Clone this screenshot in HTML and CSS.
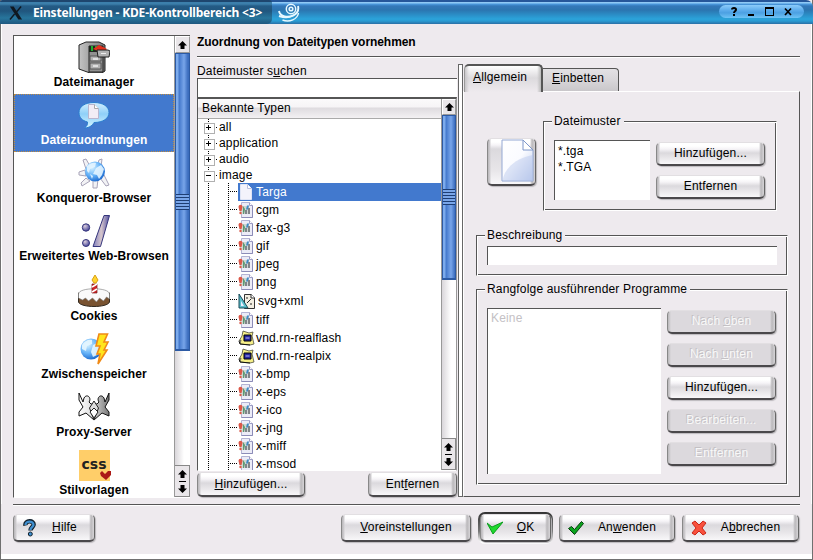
FILE: index.html
```html
<!DOCTYPE html>
<html lang="de">
<head>
<meta charset="utf-8">
<title>Einstellungen - KDE-Kontrollbereich</title>
<link rel="stylesheet" href="styles.css">
</head>
<body>
<svg class="defs" aria-hidden="true">
  <defs>
    <linearGradient id="gSteel" x2="1"><stop stop-color="#c4c4c4"/><stop offset="1" stop-color="#777"/></linearGradient>
    <linearGradient id="gPage" x2="1" y2="1"><stop stop-color="#fff"/><stop offset=".5" stop-color="#fafbff"/><stop offset="1" stop-color="#b9c9ec"/></linearGradient>
    <radialGradient id="gGlobe" cx=".35" cy=".3" r=".8"><stop stop-color="#d8f2ff"/><stop offset=".5" stop-color="#68b4f8"/><stop offset="1" stop-color="#0d5cc8"/></radialGradient>
    <linearGradient id="gBubble" x2="0" y2="1"><stop stop-color="#d4efff"/><stop offset=".45" stop-color="#8fd0f8"/><stop offset="1" stop-color="#d7f6ff"/></linearGradient>
    <linearGradient id="gSlash" x2="1"><stop stop-color="#8180bd"/><stop offset=".5" stop-color="#d6c6cc"/><stop offset="1" stop-color="#5250a0"/></linearGradient>
    <radialGradient id="gBall" cx=".35" cy=".3" r=".7"><stop stop-color="#ddd0dd"/><stop offset="1" stop-color="#4d4c9c"/></radialGradient>
    <linearGradient id="gWing" x2="1"><stop stop-color="#fff"/><stop offset=".45" stop-color="#ddd"/><stop offset="1" stop-color="#777"/></linearGradient>
    <symbol id="up" viewBox="0 0 9 8"><path d="M4.500 0 9 4.500H6.500V8h-4V4.500H0z" fill="#000"/></symbol>
    <symbol id="img" viewBox="0 0 16 16">
      <path d="M3.500.5h8l3 3v12h-11z" fill="#ececf7" stroke="#b4b4d4"/><path d="M14.500 3.500v12h-11" fill="none" stroke="#8c8cb8"/><path d="M11.500.5v3h3" fill="#fff" stroke="#9c9cc4"/>
      <path d="M1 4h10v8H2z" fill="#d0d6d2"/><path d="M.5 5c0-3 4-3 4 0l-1 4h-2z" fill="#dc5748"/><circle cx="2.500" cy="11" r="1.200" fill="#dc5748"/><path d="M5 4l2 3-1 5H5z" fill="#5c9a72"/><path d="M6 3.500l2 4 1-4h2l-1 4H8z" fill="#3f8ac6"/><path d="M10 6h2v6h-2zM7 8h2v4H7z" fill="#7f8489"/>
    </symbol>
    <symbol id="real" viewBox="0 0 17 16">
      <path d="M5 1l6 2 4-1-1 4 2 8-4 1-10-1 1-4-2 1 3-5z" fill="#f6ef88" stroke="#4a4a3c" stroke-width=".8"/><path d="M1 11l1 3 10 1" fill="none" stroke="#111"/><path d="M6 5h7v6H6z" fill="#2525a0" stroke="#000"/><path d="M7.500 8h4" stroke="#bdbdf4"/>
    </symbol>
  </defs>
</svg>

<div class="window">
  <header class="titlebar">
    <div class="caption">
      <svg class="xlogo" viewBox="0 0 15 14"><path d="M1 0h4l9 14h-4z" fill="#101820"/><path d="M13 0 8 6M6 8l-5 6" stroke="#101820" stroke-width="1.500"/></svg>
      <span>Einstellungen - KDE-Kontrollbereich &lt;3&gt;</span>
    </div>
    <svg class="swirl" viewBox="0 0 22 20"><g fill="none" stroke="#e6f8ff"><circle cx="13" cy="6" r="4.700" stroke-width="1.500"/><circle cx="13" cy="6" r="1.800" stroke-width="1.600"/><path d="M1 8c1 6 9 7 15 4" stroke-width="1.900"/><path d="M20 3c2 8-8 14-19 10" stroke-width="1.900"/><path d="M20.500 10c-1 6-9 10-16 7" stroke-width="1.500"/></g></svg>
    <div class="winbuttons">
      <svg viewBox="0 0 85 14"><g fill="none" stroke="#000" stroke-width="2"><path d="M13 4.500c0-2 4-2 4 0s-2 1.500-2 3.500M15 9v2"/><path d="M29 10h6"/><path d="M46.500 3v8M54.500 3v8M46 10.500h9" stroke-width="1"/><path d="M46 3h9"/><path d="M66 3.500l6 6.500M72 3.500l-6 6.500" stroke-width="1.700"/></g></svg>
    </div>
  </header>

  <main class="content">
    <nav class="modules">
      <div class="modlist">
        <div class="mod"><svg viewBox="0 0 32 32"><path d="M1 4 8 1h13l6 3v26l-3 2H12L1 28z" fill="url(#gSteel)" stroke="#222"/><path d="M11 5h14v26H11z" fill="#909090" stroke="#222"/><path d="M11 5h14v6H11z" fill="#202820"/><path d="M14 5v5M18 5v4" stroke="#1fae2d" stroke-width="2"/><path d="M15 8l6-4 8 4-4 4z" fill="#e3311d"/><path d="M12 15h11v5H12zM12 22h11v6H12z" fill="#b2b2b2" stroke="#555"/><path d="M15 18h5M15 25h5" stroke="#eee" stroke-width="1.500"/><path d="M19 9h11l2 1-1 6H20z" fill="#b2b2b2" stroke="#222"/><path d="M23 12.500h5" stroke="#eee"/></svg><span>Dateimanager</span></div>
        <div class="mod selected"><svg viewBox="0 0 32 32"><path d="M16 3.500C7 3.500 1 7.500 1 13.500c0 5 3 8 8.500 9.500 0 3-.5 4-3 6 6-.5 8-3 9.500-5.500 9 0 15-4 15-10S25 3.500 16 3.500z" fill="url(#gBubble)" stroke="#2b7ecf"/><path d="M10.500 5.500h6l4 4v10h-10z" fill="#f2edf5" stroke="#b9b6cf"/><path d="M16.500 5.500v4h4" fill="#fff" stroke="#aaa"/></svg><span>Dateizuordnungen</span></div>
        <div class="mod"><svg viewBox="0 0 32 32"><g fill="#f2f2f5" stroke="#a7a3b8"><path d="M5 3l3-1 4 7-4 3zM21 3l3-1-1 8-4-1zM1 15l6-2 1 6-7-1zM3 26l5-5 4 3-8 5zM15 22h5l-1 9h-4zM22 21l4-3 5 10-3 1z"/></g><circle cx="17" cy="14.500" r="10" fill="url(#gGlobe)"/><path d="M9 9c3-3 7-4 9-3l-1 4-5 2-1 4-2-2zM18 11l5-3 3 4-2 6-3 4-2-4-4-1zM12 17l3 2-1 3z" fill="#e3f4ff" opacity=".9"/></svg><span>Konqueror-Browser</span></div>
        <div class="mod"><svg viewBox="0 0 32 32"><circle cx="8" cy="12.500" r="3.700" fill="url(#gBall)" stroke="#35357c"/><circle cx="8" cy="28" r="3.500" fill="url(#gBall)" stroke="#35357c"/><path d="M26 .5h5.500l-9 31H15z" fill="url(#gSlash)" stroke="#35357c"/></svg><span>Erweitertes Web-Browsen</span></div>
        <div class="mod later"><svg viewBox="0 0 32 32"><path d="M.5 18v9c2 6 29 6 31 0v-9z" fill="#795331" stroke="#332a20"/><path d="M.5 19c0-7 31-7 31 0v5l-3-2-3 4-4-3-3 4-4-4-4 3-3-3-3 2-4-2z" fill="#fafafa" stroke="#777" stroke-width=".6"/><path d="M14 9h5v9h-5z" fill="#d12729" stroke="#701919" stroke-width=".7"/><path d="M14 12l5-3M14 17l5-3" stroke="#fff" stroke-width="1.500"/><path d="M17 0l3 5-2 3h-2l-2-3z" fill="#ffd330" stroke="#d9a212"/></svg><span>Cookies</span></div>
        <div class="mod"><svg viewBox="0 0 32 32"><circle cx="13" cy="16" r="10.500" fill="url(#gGlobe)"/><path d="M4 12c2-4 7-6 10-5v4l-5 2-1 5-4-2zM15 12l6-3v12l-6 3-2-5z" fill="#e5f6ff" opacity=".9"/><path d="M21 1h8.500l-3.500 8h4l-4 8h3l-9 14 2-10h-3l3-8h-4z" fill="#ffe51c" stroke="#f08a16" stroke-width="1.600"/></svg><span>Zwischenspeicher</span></div>
        <div class="mod"><svg viewBox="0 0 32 32"><path d="M1 2l4 9 1-4c3-5 8 0 5 4l2 2h6l2-2c-3-4 2-9 5-4l1 4 4-9v7l-4 7 4 5v4l-7-3-8 7-8-7-7 3v-4l4-5-4-7z" fill="url(#gWing)" stroke="#111"/><path d="M16 10l-4.500 7L16 29l4.500-12z" fill="#ddd" stroke="#222"/><path d="M16 17l-4 4 4 6 4-6z" fill="#fff" stroke="#222"/></svg><span>Proxy-Server</span></div>
        <div class="mod"><div class="cssicon"><b>css</b><svg viewBox="0 0 11 9"><path d="M0 2l2-2 3 3 3-3h3v4l-5 5-5-4z" fill="#ac1a16"/></svg></div><span>Stilvorlagen</span></div>
      </div>
      <div class="scroll"><div class="arrow"><svg><use href="#up"/></svg></div><div class="thumb"><i></i></div><div class="trough"></div><div class="arrows"><svg><use href="#up"/></svg><hr><svg class="down"><use href="#up"/></svg></div></div>
    </nav>

    <section class="page">
      <h1>Zuordnung von Dateitypen vornehmen</h1>
      <div class="columns">
        <div class="types">
          <label>Dateimuster s<u>u</u>chen</label>
          <div class="search"></div>
          <div class="tree">
            <div class="treebody">
              <div class="treehead">Bekannte Typen</div>
              <div class="root plus first">all</div>
              <div class="root plus">application</div>
              <div class="root plus">audio</div>
              <div class="root">image</div>
              <div class="kids">
                <div class="kid"><div class="hit"><svg viewBox="0 0 16 16"><path d="M2.500.5h7l4 4v11h-11z" fill="#f3f3fb" stroke="#dfe5f5"/><path d="M9.500.5v4h4" fill="#fff" stroke="#b8bedc"/></svg><span>Targa</span></div></div>
                <div class="kid"><svg><use href="#img"/></svg><span>cgm</span></div>
                <div class="kid"><svg><use href="#img"/></svg><span>fax-g3</span></div>
                <div class="kid"><svg><use href="#img"/></svg><span>gif</span></div>
                <div class="kid"><svg><use href="#img"/></svg><span>jpeg</span></div>
                <div class="kid"><svg><use href="#img"/></svg><span>png</span></div>
                <div class="kid tall"><svg viewBox="0 0 18 17"><path d="M6.500 1.500h7l3 3v11h-10z" fill="#f4efe2" stroke="#333"/><path d="M13 1v4h4" fill="#fff" stroke="#333"/><path d="M1 1l9 14H1z" fill="#5fc0cc" stroke="#174a58"/><path d="M3 8l3 5H3z" fill="#eef"/><path d="M9 10l4-4M9 4v2M13 10v2" stroke="#222"/></svg><span>svg+xml</span></div>
                <div class="kid"><svg><use href="#img"/></svg><span>tiff</span></div>
                <div class="kid"><svg class="wide"><use href="#real"/></svg><span>vnd.rn-realflash</span></div>
                <div class="kid"><svg class="wide"><use href="#real"/></svg><span>vnd.rn-realpix</span></div>
                <div class="kid"><svg><use href="#img"/></svg><span>x-bmp</span></div>
                <div class="kid"><svg><use href="#img"/></svg><span>x-eps</span></div>
                <div class="kid"><svg><use href="#img"/></svg><span>x-ico</span></div>
                <div class="kid"><svg><use href="#img"/></svg><span>x-jng</span></div>
                <div class="kid"><svg><use href="#img"/></svg><span>x-miff</span></div>
                <div class="kid"><svg><use href="#img"/></svg><span>x-msod</span></div>
              </div>
            </div>
            <div class="scroll"><div class="arrow"><svg><use href="#up"/></svg></div><div class="thumb"><i></i></div><div class="trough"></div><div class="arrows"><svg><use href="#up"/></svg><hr><svg class="down"><use href="#up"/></svg></div></div>
          </div>
          <div class="typebuttons"><div class="btn add"><span><u>H</u>inzufügen...</span></div><div class="btn del"><span>Ent<u>f</u>ernen</span></div></div>
        </div>
        <div class="splitter"></div>
        <div class="details">
          <div class="tabs"><div class="tab active"><span><u>A</u>llgemein</span></div><div class="tab"><span><u>E</u>inbetten</span></div></div>
          <div class="panel">
            <div class="toprow">
              <div class="btn preview"><svg viewBox="0 0 34 44"><path d="M1 1h21l10 10v31H1z" fill="url(#gPage)" stroke="#94a8d4"/><path d="M1.500 42C3 28 18 18 32 16v26z" fill="#b6c6ec" opacity=".45"/><path d="M22 1v10h10z" fill="#fff" stroke="#7d96ca"/></svg></div>
              <div class="group patterns">
                <div class="legend">Dateimuster</div>
                <div class="box"><div>*.tga</div><div>*.TGA</div></div>
                <div class="stack"><div class="btn"><span>Hinzufügen...</span></div><div class="btn"><span>Entfernen</span></div></div>
              </div>
            </div>
            <div class="group desc"><div class="legend">Beschreibung</div><div class="box"></div></div>
            <div class="group prefs">
              <div class="legend">Rangfolge ausführender Programme</div>
              <div class="box off">Keine</div>
              <div class="stack">
                <div class="btn off"><span>Nach <u>o</u>ben</span></div>
                <div class="btn off"><span>Nach <u>u</u>nten</span></div>
                <div class="btn"><span>Hinzufügen...</span></div>
                <div class="btn off"><span>Bearbeiten...</span></div>
                <div class="btn off"><span>Entfernen</span></div>
              </div>
            </div>
          </div>
        </div>
      </div>
    </section>
  </main>

  <footer class="actions">
    <div class="btn help"><svg viewBox="0 0 16 18"><path d="M3.500 6.500C2.500 1 12.500 1 11.500 6c-.3 2-3 2.500-3 5.500" fill="none" stroke="#10202c" stroke-width="4.500"/><path d="M3.500 6C3.500 1.500 11.700 1.500 11.500 6c-.3 2-3 2.500-3 5" fill="none" stroke="#3f8fd0" stroke-width="2.300"/><circle cx="8.300" cy="15" r="2" fill="#3f8fd0" stroke="#10202c"/></svg><span><u>H</u>ilfe</span></div>
    <div class="spacer"></div>
    <div class="btn defaults"><span><u>V</u>oreinstellungen</span></div>
    <div class="ring"><div class="btn ok"><svg viewBox="0 0 16 16"><path d="M0 3l5 4L16 2 6 14z" fill="#1fd92e" stroke="#0a9d1c"/></svg><span><u>O</u>K</span></div></div>
    <div class="btn apply"><svg viewBox="0 0 16 16"><path d="M.5 8.500l3-2 3 3 7-8 2 2-9 11z" fill="#0ba51e" stroke="#043c0c"/></svg><span>An<u>w</u>enden</span></div>
    <div class="btn cancel"><svg viewBox="0 0 16 16"><path d="M1 3l3-2 4 4 4-4 3 2-4 5 4 5-3 2-4-4-4 4-3-2 4-5z" fill="#f8503c" stroke="#c92719"/></svg><span>A<u>b</u>brechen</span></div>
  </footer>
</div>
</body>
</html>
```
FILE: styles.css
```css
* { box-sizing: border-box; }
body { margin: 0; width: 813px; height: 560px; overflow: hidden; background: #777; font: 12px/16px "Liberation Sans", Arial, sans-serif; letter-spacing: .17px; color: #000; }
svg { display: block; flex: none; }
u { text-decoration: underline; text-underline-offset: 1px; text-decoration-thickness: 1px; text-decoration-skip-ink: none; }
.defs { position: absolute; width: 0; height: 0; }

.window { display: flex; flex-direction: column; width: 813px; height: 560px; border: solid #707070; border-width: 0 1px 1px; background: #eeeaee; box-shadow: inset 0 -5px #fff; }
.titlebar { display: flex; align-items: flex-start; height: 24px; margin: 0 -1px; border-radius: 3px 7px 0 0; background: linear-gradient(#25569a 0 2px, #8fc9f5 2px 3px, #4c9be0 4px, #3478b9 6px, #2b75b0 10px, #2ba3da 19px, #2a9bd2 21px, #2a6fa6 24px); }
.caption { display: flex; align-items: center; width: 272px; height: 24px; padding: 2px 0 0 9px; border-radius: 3px 3px 5px 0; background: linear-gradient(#1e466e 0 2px, #3c7fab 2px 4px, #245b85 6px, #20567e 11px, #27759c 18px, #1e577f 24px); color: #fff; font: bold 12px/16px "Noto Sans", sans-serif; letter-spacing: -.17px; white-space: nowrap; }
.xlogo { width: 14px; height: 14px; margin-right: 10px; }
.swirl { width: 22px; height: 20px; margin: 3px 0 0 6px; }
.winbuttons { width: 85px; height: 13px; margin: 5px 9px 0 auto; border-radius: 7px; background: linear-gradient(#8ccbfa, #58a9ea 45%, #4ca0e2 60%, #6dc3f6); }
.winbuttons svg { width: 85px; height: 14px; }

.content { display: flex; gap: 7px; height: 480px; padding: 11px 11px 0 11px; border-left: 1px solid #fff; border-right: 1px solid #fff; }
.modules { display: grid; grid-template-columns: 160px 16px; width: 177px; height: 463px; border: solid #555; border-width: 1px 0 0 1px; border-bottom: 1px solid #fff; background: #fff; }
.modlist { overflow: hidden; }
.mod { display: flex; flex-direction: column; align-items: center; height: 58px; padding-top: 5px; font-weight: bold; letter-spacing: .08px; white-space: nowrap; }
.later { margin-top: 2px; }
.mod > svg, .cssicon { width: 32px; height: 32px; }
.mod > span { margin-top: 1px; }
.selected { background: #4279ce; color: #fff; outline: 1px dotted #c38d3e; outline-offset: -1px; }
.cssicon { position: relative; width: 31px; height: 31px; margin-top: 1px; background: #ffce69; text-align: center; font: bold 14px/28px "DejaVu Sans", sans-serif; letter-spacing: 0; color: #222; }
.cssicon svg { position: absolute; right: -1px; bottom: 1px; width: 11px; height: 9px; }

.scroll { display: flex; flex-direction: column; width: 16px; border-left: 1px solid #999; background: #f4f1f4; }
.arrow { display: flex; align-items: center; justify-content: center; height: 16px; border: 1px solid #fff; border-right-color: #999; border-bottom-color: #999; background: #e9e6e9; }
.arrow svg, .arrows svg { width: 9px; height: 8px; }
.thumb { display: flex; align-items: center; border: solid #2c5aa4; border-width: 1px 1px 2px; background: linear-gradient(90deg, #7cabec 0 2px, #4277cb 3px, #78a5e9 8px, #5888d4 10px, #3c6dbd 12px); }
.thumb i { width: 100%; height: 16px; background: repeating-linear-gradient(#1e3e73 0 1px, #79a6e9 1px 3px); }
.modules .arrow { height: 17px; }
.modules .thumb { height: 298px; }
.tree .thumb { height: 165px; }
.trough { flex: 1; background: linear-gradient(90deg, #d9d6da, #fff 9px); }
.arrows { display: flex; flex-direction: column; align-items: center; justify-content: center; gap: 3px; height: 32px; border: 1px solid #888; border-left: 0; background: #e9e6e9; }
.arrows hr { width: 7px; height: 1px; margin: 0; border: 0; background: #000; }
.down { transform: rotate(180deg); }

.page { flex: 1; min-width: 0; }
h1 { height: 22px; margin: 0; padding-bottom: 6px; border-bottom: 1px solid #555; box-shadow: 0 1px #fff; font-size: 12px; line-height: 14px; letter-spacing: -.06px; }
.columns { display: flex; height: 441px; }
.types { flex: none; width: 260px; padding-top: 6px; }
label { display: block; height: 15px; }
.search { height: 19px; border: solid #555; border-width: 1px 0 0 1px; background: #fff; }
.tree { display: flex; height: 374px; border: solid #555; border-width: 2px 0 0 1px; border-right: 1px solid #999; border-bottom: 1px solid #fff; background: #fff; }
.treebody { width: 243px; overflow: hidden; }
.tree .scroll { width: 15px; }
.treehead { height: 20px; padding: 1px 0 0 4px; border-bottom: 1px solid #aaa; background: linear-gradient(#fbfafb, #f6f4f6 8px, #dedbdf 9px, #f3f1f3); letter-spacing: .17px; }
.root { position: relative; height: 16px; padding-left: 21px; background: linear-gradient(#fff, #fff) 6px 4px/9px 9px no-repeat, repeating-linear-gradient(#000 0 1px, transparent 1px 2px) 10px 0/1px 100% no-repeat, repeating-linear-gradient(90deg, #000 0 1px, transparent 1px 2px) 16px 8px/4px 1px no-repeat; }
.root::before { content: ""; position: absolute; left: 6px; top: 4px; width: 9px; height: 9px; border: 1px solid #b0b0b0; background: linear-gradient(#000, #000) 1px 3px/5px 1px no-repeat, #fff; }
.root.plus::before { background: linear-gradient(#000, #000) 1px 3px/5px 1px no-repeat, linear-gradient(#000, #000) 3px 1px/1px 5px no-repeat, #fff; }
.kids { background: repeating-linear-gradient(#000 0 1px, transparent 1px 2px) 10px 0/1px 100% no-repeat, repeating-linear-gradient(#000 0 1px, transparent 1px 2px) 30px 0/1px 100% no-repeat; }
.kid { display: flex; align-items: center; height: 18px; padding-left: 40px; background: repeating-linear-gradient(90deg, #000 0 1px, transparent 1px 2px) 32px 8px/8px 1px no-repeat; white-space: nowrap; }
.kid svg { width: 16px; height: 16px; margin-right: 2px; }
.kid svg.wide { width: 17px; margin-right: 1px; }
.tall { height: 20px; }
.kid.tall svg { width: 18px; height: 17px; }
.hit { display: flex; flex: 1; align-items: center; height: 18px; background: #4279ce; color: #fff; }
.typebuttons { display: flex; justify-content: space-between; padding-top: 1px; }

.btn { display: flex; align-items: center; justify-content: center; width: 109px; height: 25px; border: solid #e2dfe2; border-width: 1px; border-right-color: #666; border-bottom: 2px solid #4a484b; border-left-color: #888; border-radius: 5px; background: linear-gradient(90deg, #b9b7ba 0, #d0ced1 2px, #fff0 3px calc(100% - 5px), #bab8bb calc(100% - 3px), #d6d4d7), linear-gradient(#fff 0 3px, #f6f4f7 6px, #dbd9dd 10px, #e8e6e9 70%, #f8f7f9); box-shadow: 1px 1px 1px #bbb8bc; white-space: nowrap; }
.btn > span { padding-bottom: 1px; }
.add { width: 108px; }
.del { width: 89px; }
.btn.off { color: #f8f8f8; text-shadow: -1px -1px #c3c0c4; background: linear-gradient(90deg, #b9b7ba 0, #d0ced1 2px, #fff0 3px calc(100% - 5px), #bab8bb calc(100% - 3px), #d6d4d7), #dcd9dd; }

.splitter { flex: none; width: 5px; height: 433px; margin: 7px 0 0 1px; border: 1px solid #666; background: #fff; }
.details { flex: 1; min-width: 0; margin-top: 7px; }
.tabs { display: flex; align-items: flex-end; height: 27px; padding-left: 1px; }
.tab { width: 76px; height: 23px; padding: 1px 0 0 9px; border: solid #555; border-width: 1px 1px 0 0; border-radius: 0 4px 0 0; background: linear-gradient(#e3e1e4, #d8d6d9 50%, #c9c7ca); letter-spacing: .15px; }
.tab.active { width: 79px; height: 28px; margin-bottom: -1px; padding: 3px 0 0 8px; border-width: 2px 2px 0 1px; border-left-color: #999; border-radius: 5px 5px 0 0; background: linear-gradient(90deg, #c8c6c9, #fff0 4px calc(100% - 4px), #bbb), linear-gradient(#fff, #dcdadd 12px, #eeeaee); }
.panel { height: 406px; padding: 29px 11px 0 12px; border: 1px solid #fff; border-right-color: #555; border-bottom-color: #555; }
.toprow { display: flex; height: 114px; }
.preview { width: 49px; height: 48px; margin: 17px 7px 0 11px; justify-content: flex-end; padding: 0 0 2px; }
.preview svg { width: 34px; height: 44px; }
.group { position: relative; display: flex; border: 1px solid #555; border-right-color: #fff; border-bottom-color: #fff; box-shadow: inset 1px 1px #fff, inset -1px -1px #555; }
.legend { position: absolute; left: 8px; top: -9px; padding: 0 3px 0 2px; background: #eeeaee; white-space: nowrap; }
.box { border: solid #555; border-width: 1px 0 0 1px; background: #fff; }
.stack { display: flex; flex-direction: column; gap: 9px; }
.stack .btn { height: 24px; }
.patterns { width: 234px; height: 90px; padding: 18px 0 0 10px; }
.patterns .box { width: 96px; height: 60px; margin-right: 6px; padding: 2px 0 0 3px; }
.patterns .stack { padding-top: 2px; }
.desc { width: 312px; height: 41px; padding: 10px; }
.desc .box { width: 290px; height: 19px; }
.prefs { width: 312px; height: 196px; margin-top: 13px; padding: 18px 0 0 10px; }
.prefs .box { width: 174px; height: 166px; margin-right: 6px; padding: 1px 0 0 3px; color: #c4c1c5; }
.prefs .stack { padding-top: 2px; }

.actions { display: flex; height: 55px; margin: 0 12px 0 12px; padding: 9px 1px 0 0; border-top: 1px solid #555; box-shadow: inset 0 1px #fff; align-items: flex-start; }
.actions .btn { height: 28px; }
.actions .btn svg { width: 16px; height: 16px; }
.spacer { flex: 1; }
.help { width: 82px; gap: 14px; padding-right: 9px; }
.actions .help svg { height: 18px; }
.defaults { width: 130px; }
.ring { width: 75px; height: 32px; margin: -2px 6px 0 7px; padding: 2px 2px 0; border-radius: 7px; background: linear-gradient(#333, #777 60%, #fff 95%); }
.ring .ok { width: 71px; gap: 14px; padding-right: 10px; }
.apply { width: 116px; gap: 14px; padding-right: 10px; }
.cancel { width: 117px; margin-left: 7px; gap: 14px; padding-right: 10px; }
```
